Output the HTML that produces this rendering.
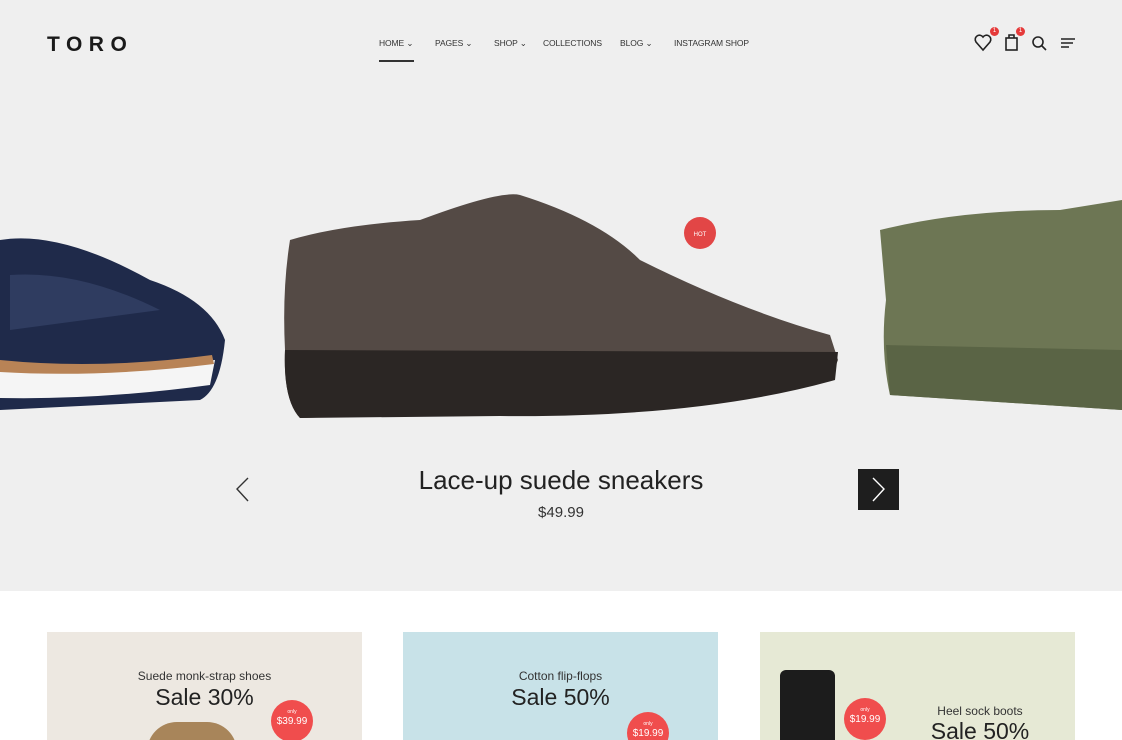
<!DOCTYPE html>
<html><head><meta charset="utf-8"><style>
*{margin:0;padding:0;box-sizing:border-box}
body{width:1122px;height:740px;overflow:hidden;background:#fff;font-family:"Liberation Sans",sans-serif;color:#222;position:relative}
.hero{position:absolute;left:0;top:0;width:1122px;height:591px;background:#efefef}
.logo{position:absolute;left:47px;top:33px;font-size:21px;font-weight:bold;letter-spacing:6.5px;color:#1a1a1a}
.nav{position:absolute;top:38px;font-size:8.5px;color:#333;letter-spacing:-0.1px}
.ul{position:absolute;left:379px;top:60px;width:35px;height:2px;background:#333}
.badge{position:absolute;width:9px;height:9px;border-radius:50%;background:#e53a3a;color:#fff;font-size:6px;text-align:center;line-height:9px}
.title{position:absolute;left:0;width:1122px;top:465px;text-align:center;font-size:26px;color:#222}
.price{position:absolute;left:0;width:1122px;top:504px;text-align:center;font-size:15px;color:#333}
.next{position:absolute;left:858px;top:469px;width:41px;height:41px;background:#1e1e1e}
.card{position:absolute;top:632px;width:315px;height:108px;overflow:hidden}
.ct{position:absolute;width:100%;text-align:center;font-size:12px;color:#333}
.cs{position:absolute;width:100%;text-align:center;font-size:23px;color:#222}
.dot{position:absolute;width:42px;height:42px;border-radius:50%;background:#f04d4d;color:#fff;text-align:center;font-size:10px;padding-top:10px;line-height:1.1}
.dot small{font-size:5px;display:block}
</style></head><body>
<div class="hero"></div>
<div class="logo">TORO</div>
<div class="nav" style="left:379px">HOME ⌄</div>
<div class="nav" style="left:435px">PAGES ⌄</div>
<div class="nav" style="left:494px">SHOP ⌄</div>
<div class="nav" style="left:543px">COLLECTIONS</div>
<div class="nav" style="left:620px">BLOG ⌄</div>
<div class="nav" style="left:674px">INSTAGRAM SHOP</div>
<div class="ul"></div>
<svg style="position:absolute;left:970px;top:30px" width="110" height="26" fill="none" stroke="#222" stroke-width="1.6">
<path d="M13 20 L6 12 A4 4 0 0 1 13 7 A4 4 0 0 1 20 12 Z"/>
<rect x="36" y="8" width="11" height="12"/><path d="M39 8 V5 H44 V8"/>
<circle cx="68" cy="12" r="5"/><path d="M72 16 L76 20"/>
<path d="M91 9 H105 M91 13 H103 M91 17 H99"/>
</svg>
<div class="badge" style="left:990px;top:27px">1</div>
<div class="badge" style="left:1016px;top:27px">1</div>
<svg style="position:absolute;left:0;top:180px" width="1122" height="250">
<path d="M0 60 Q60 50 150 100 Q210 120 225 160 Q220 210 200 220 L0 230 Z" fill="#1f2a4a"/>
<path d="M10 95 Q80 90 160 130 L10 150 Z" fill="#2f3c60"/>
<path d="M0 190 Q110 190 215 180 L210 205 Q100 220 0 218 Z" fill="#f5f5f5"/>
<path d="M0 180 Q100 190 212 175 L214 184 Q100 198 0 192 Z" fill="#b88356"/>
<path d="M290 60 Q340 45 420 40 Q500 10 520 15 Q600 40 640 80 Q740 130 830 155 L838 180 L830 200 Q700 235 500 232 L300 238 Q283 220 285 170 Q282 110 290 60 Z" fill="#544a45"/>
<path d="M285 170 L838 172 L835 200 Q700 238 500 236 L300 238 Q283 220 285 170 Z" fill="#2b2624"/>
<path d="M880 50 Q960 30 1060 30 L1122 20 L1122 230 L890 215 Q880 170 886 120 Z" fill="#6d7654"/>
<path d="M886 165 L1122 170 L1122 230 L890 215 Z" fill="#5a6445"/>
<circle cx="700" cy="53" r="16" fill="#e24646"/>
<text x="700" y="56" font-size="6" fill="#fff" text-anchor="middle" font-family="Liberation Sans">HOT</text>
</svg>
<svg style="position:absolute;left:234px;top:476px" width="18" height="28" fill="none" stroke="#333" stroke-width="1.4"><path d="M14 2 L3 13 L14 25"/></svg>
<div class="next"><svg width="41" height="41" fill="none" stroke="#fff" stroke-width="1.4"><path d="M15 9 L26 20 L15 32"/></svg></div>
<div class="title">Lace-up suede sneakers</div>
<div class="price">$49.99</div>

<div class="card" style="left:47px;background:#ede8e1">
<div class="ct" style="top:37px">Suede monk-strap shoes</div>
<div class="cs" style="top:52px">Sale 30%</div>
<div class="dot" style="left:224px;top:68px"><small>only</small>$39.99</div>
<div style="position:absolute;left:100px;top:90px;width:90px;height:30px;background:#a8855a;border-radius:40px 40px 0 0"></div>
</div>
<div class="card" style="left:403px;background:#c8e2e8">
<div class="ct" style="top:37px">Cotton flip-flops</div>
<div class="cs" style="top:52px">Sale 50%</div>
<div class="dot" style="left:224px;top:80px"><small>only</small>$19.99</div>
</div>
<div class="card" style="left:760px;background:#e6e9d5">
<div style="position:absolute;left:20px;top:38px;width:55px;height:80px;background:#1c1c1c;border-radius:6px 6px 0 0"></div>
<div class="dot" style="left:84px;top:66px"><small>only</small>$19.99</div>
<div class="ct" style="top:72px;left:115px;width:210px">Heel sock boots</div>
<div class="cs" style="top:86px;left:115px;width:210px">Sale 50%</div>
</div>
</body></html>
